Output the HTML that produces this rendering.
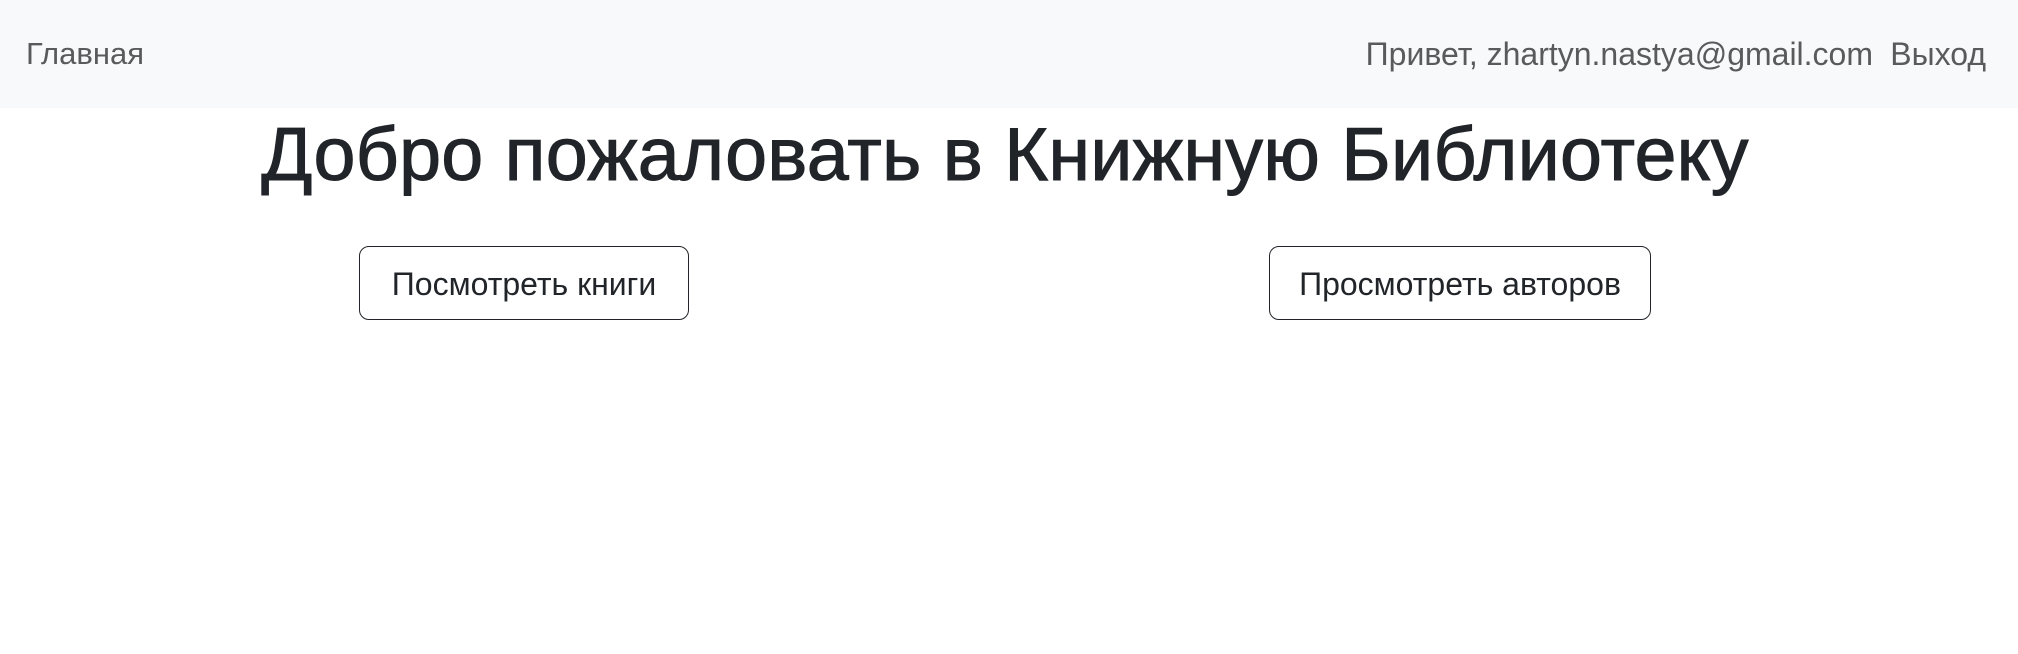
<!DOCTYPE html>
<html><head><meta charset="utf-8"><style>
html,body{margin:0;padding:0;width:2018px;height:654px;background:#fff;overflow:hidden;font-family:"Liberation Sans",Arial,sans-serif;}
.nav{position:absolute;left:0;top:0;width:2018px;height:108px;background:#f8f9fa;}
.nav span{position:absolute;top:34px;font-size:31px;line-height:40px;color:#595a5c;white-space:nowrap;}
h1{position:absolute;left:0;width:2010px;top:108px;margin:0;text-align:center;font-size:75.5px;line-height:92px;font-weight:400;-webkit-text-stroke:1px #212529;color:#212529;letter-spacing:0.2px;}
.btn{position:absolute;top:246px;height:72px;border:1.6px solid #212529;border-radius:10px;font-size:32px;line-height:74px;color:#212529;text-align:center;box-sizing:content-box;white-space:nowrap;}
</style></head><body>
<div class="nav">
<span style="left:26px">Главная</span>
<span style="right:145px;font-size:32px">Привет, zhartyn.nastya@gmail.com</span>
<span style="right:32px;font-size:32px">Выход</span>
</div>
<h1>Добро пожаловать в Книжную Библиотеку</h1>
<div class="btn" style="left:359px;width:328px">Посмотреть книги</div>
<div class="btn" style="left:1269px;width:380px">Просмотреть авторов</div>
</body></html>
